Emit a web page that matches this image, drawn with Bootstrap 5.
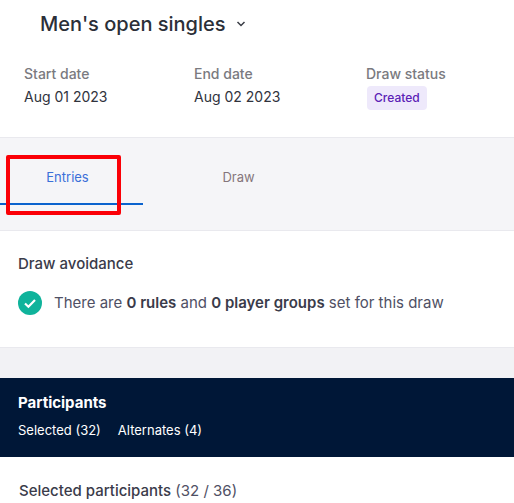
<!DOCTYPE html>
<html lang="en">
<head>
    <meta charset="UTF-8">
    <meta name="viewport" content="width=device-width, initial-scale=1.0">
    <title>Men's open singles</title>
    <link href="https://cdn.jsdelivr.net/npm/bootstrap@5.3.0/dist/css/bootstrap.min.css" rel="stylesheet">
    <style>
        body { font-family: Inter, "Liberation Sans", sans-serif; color: #3f4254; overflow: hidden; height: 503px; }
        .draw-head { height: 138px; border-bottom: 1px solid #e9e9ee; }
        .draw-title { padding: 12px 0 0 40px; height: 63px; color: #2b2f38; }
        .draw-title h1 { font-size: 20px; font-weight: 500; line-height: 24px; margin: 0; }
        .meta-row { padding-left: 24px; }
        .meta-item { font-size: 14px; line-height: 24px; color: #30333d; }
        .meta-label { color: #7a7a80; font-weight: 500; font-size: 14px; line-height: 22px; }
        .meta-start { width: 170px; }
        .meta-end { width: 172px; }
        .status-pill { background: #eee9fb; color: #5b21b6; font-size: 12px; font-weight: 500; line-height: 16px; padding: 4px 7px; border-radius: 4px; margin-left: 1px; margin-top: 1px; display: inline-block; }
        .tab-band { height: 93px; background: #f5f5f8; border-bottom: 1px solid #e9e9ee; padding-top: 14px; }
        .tab-item { width: 143px; height: 53px; font-size: 13px; line-height: 16px; padding-top: 17px; text-align: center; color: #85757c; }
        .tab-on { color: #3a6fd8; border-bottom: 2px solid #0b63ce; margin-right: 24px; padding-right: 8px; }
        .tab-plain { width: 143px; }
        .red-mark { position: absolute; left: 6px; top: 155px; width: 115px; height: 60px; border: 4px solid #fb0007; border-radius: 2px; }
        .avoid-box { height: 116px; padding: 23px 18px 0; }
        .avoid-box h2 { font-size: 15px; font-weight: 500; line-height: 20px; margin: 0 0 17px; color: #3a3b4a; }
        .avoid-line { font-size: 15px; line-height: 24px; color: #4f5064; }
        .avoid-line b { font-weight: 600; color: #3a3b4a; }
        .gap-band { height: 31px; background: #f2f2f5; border-top: 1px solid #e9e9ee; }
        .part-band { height: 79px; background: #001737; color: #fff; padding: 15px 18px 0; }
        .part-band h3 { font-size: 15px; font-weight: 700; line-height: 20px; margin: 0 0 8px; }
        .part-links { font-size: 13px; line-height: 18px; gap: 17px; }
        .picked-line { padding: 24px 19px 0; font-size: 15px; line-height: 20px; color: #4f5064; }
        .picked-line b { font-weight: 500; color: #3a3b4a; }
    </style>
</head>
<body class="position-relative">
    <div class="draw-head bg-white">
        <div class="draw-title d-flex align-items-start">
            <h1>Men's open singles</h1>
            <svg class="ms-2 mt-2" width="14" height="9" viewBox="0 0 14 9" fill="none" stroke="#3a3d46" stroke-width="1.5"><path d="M3.5 2l3.5 3.5L10.5 2"/></svg>
        </div>
        <div class="meta-row d-flex">
            <div class="meta-item meta-start">
                <div class="meta-label">Start date</div>
                <div>Aug 01 2023</div>
            </div>
            <div class="meta-item meta-end">
                <div class="meta-label">End date</div>
                <div>Aug 02 2023</div>
            </div>
            <div class="meta-item">
                <div class="meta-label">Draw status</div>
                <span class="status-pill">Created</span>
            </div>
        </div>
    </div>

    <div class="tab-band d-flex">
        <div class="tab-item tab-on">Entries</div>
        <div class="tab-item tab-plain">Draw</div>
    </div>
    <div class="red-mark"></div>

    <div class="avoid-box bg-white">
        <h2>Draw avoidance</h2>
        <div class="avoid-line d-flex align-items-center gap-2">
            <svg width="24" height="24" viewBox="0 0 24 24"><circle cx="12" cy="12" r="12" fill="#0fb39b"/><path d="M7 12.5l3.4 3.2L17 9" fill="none" stroke="#fff" stroke-width="2.2"/></svg>
            <div class="ms-1">There are <b>0 rules</b> and <b>0 player groups</b> set for this draw</div>
        </div>
    </div>

    <div class="gap-band"></div>

    <div class="part-band">
        <h3>Participants</h3>
        <div class="part-links d-flex">
            <span>Selected (32)</span>
            <span>Alternates (4)</span>
        </div>
    </div>

    <div class="picked-line bg-white"><b>Selected participants</b> (32 / 36)</div>

    <script src="https://cdn.jsdelivr.net/npm/bootstrap@5.3.0/dist/js/bootstrap.bundle.min.js"></script>
</body>
</html>
